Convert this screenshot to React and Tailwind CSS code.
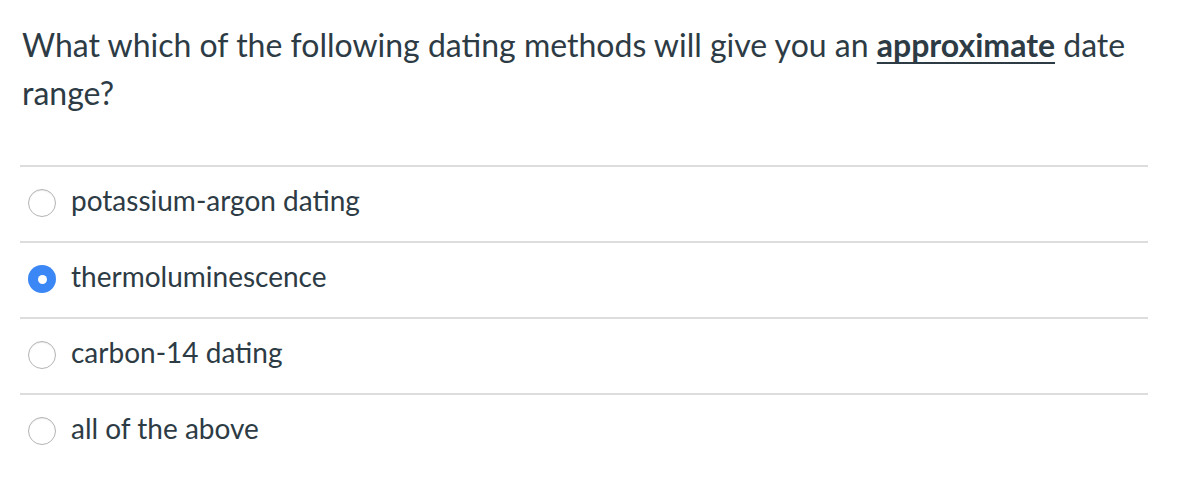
import React from "react";

const options = [
  { label: "potassium-argon dating", checked: false },
  { label: "thermoluminescence", checked: true },
  { label: "carbon-14 dating", checked: false },
  { label: "all of the above", checked: false },
];

const Radio = ({ checked }) =>
  checked ? (
    <span className="flex h-[28px] w-[28px] flex-none items-center justify-center rounded-full bg-[#3b87f5]">
      <span className="h-[9px] w-[9px] rounded-full bg-white"></span>
    </span>
  ) : (
    <span className="h-[28px] w-[28px] flex-none rounded-full border border-[#b4b4b4] bg-white shadow-[inset_0_1px_1px_rgba(0,0,0,0.08)]"></span>
  );

export default function App() {
  return (
    <div className="min-h-[484px] bg-white pl-[20px] pr-[36px] pt-[21px] text-[#2d3b45] font-['Lato','Noto_Sans',sans-serif]">
      <p className="pl-[2px] text-[32px] leading-[48px]">
        What which of the following dating methods will give you an{" "}
        <strong className="font-bold underline underline-offset-[5px] decoration-2">approximate</strong> date range?
      </p>

      <div className="mt-[48px]">
        {options.map((o) => (
          <div key={o.label} className="flex h-[76px] items-center gap-[15px] border-t-2 border-[#dddddd] pb-[2px] pl-[8px]">
            <Radio checked={o.checked} />
            <span className="pb-[6px] text-[28px] leading-none">{o.label}</span>
          </div>
        ))}
      </div>
    </div>
  );
}
